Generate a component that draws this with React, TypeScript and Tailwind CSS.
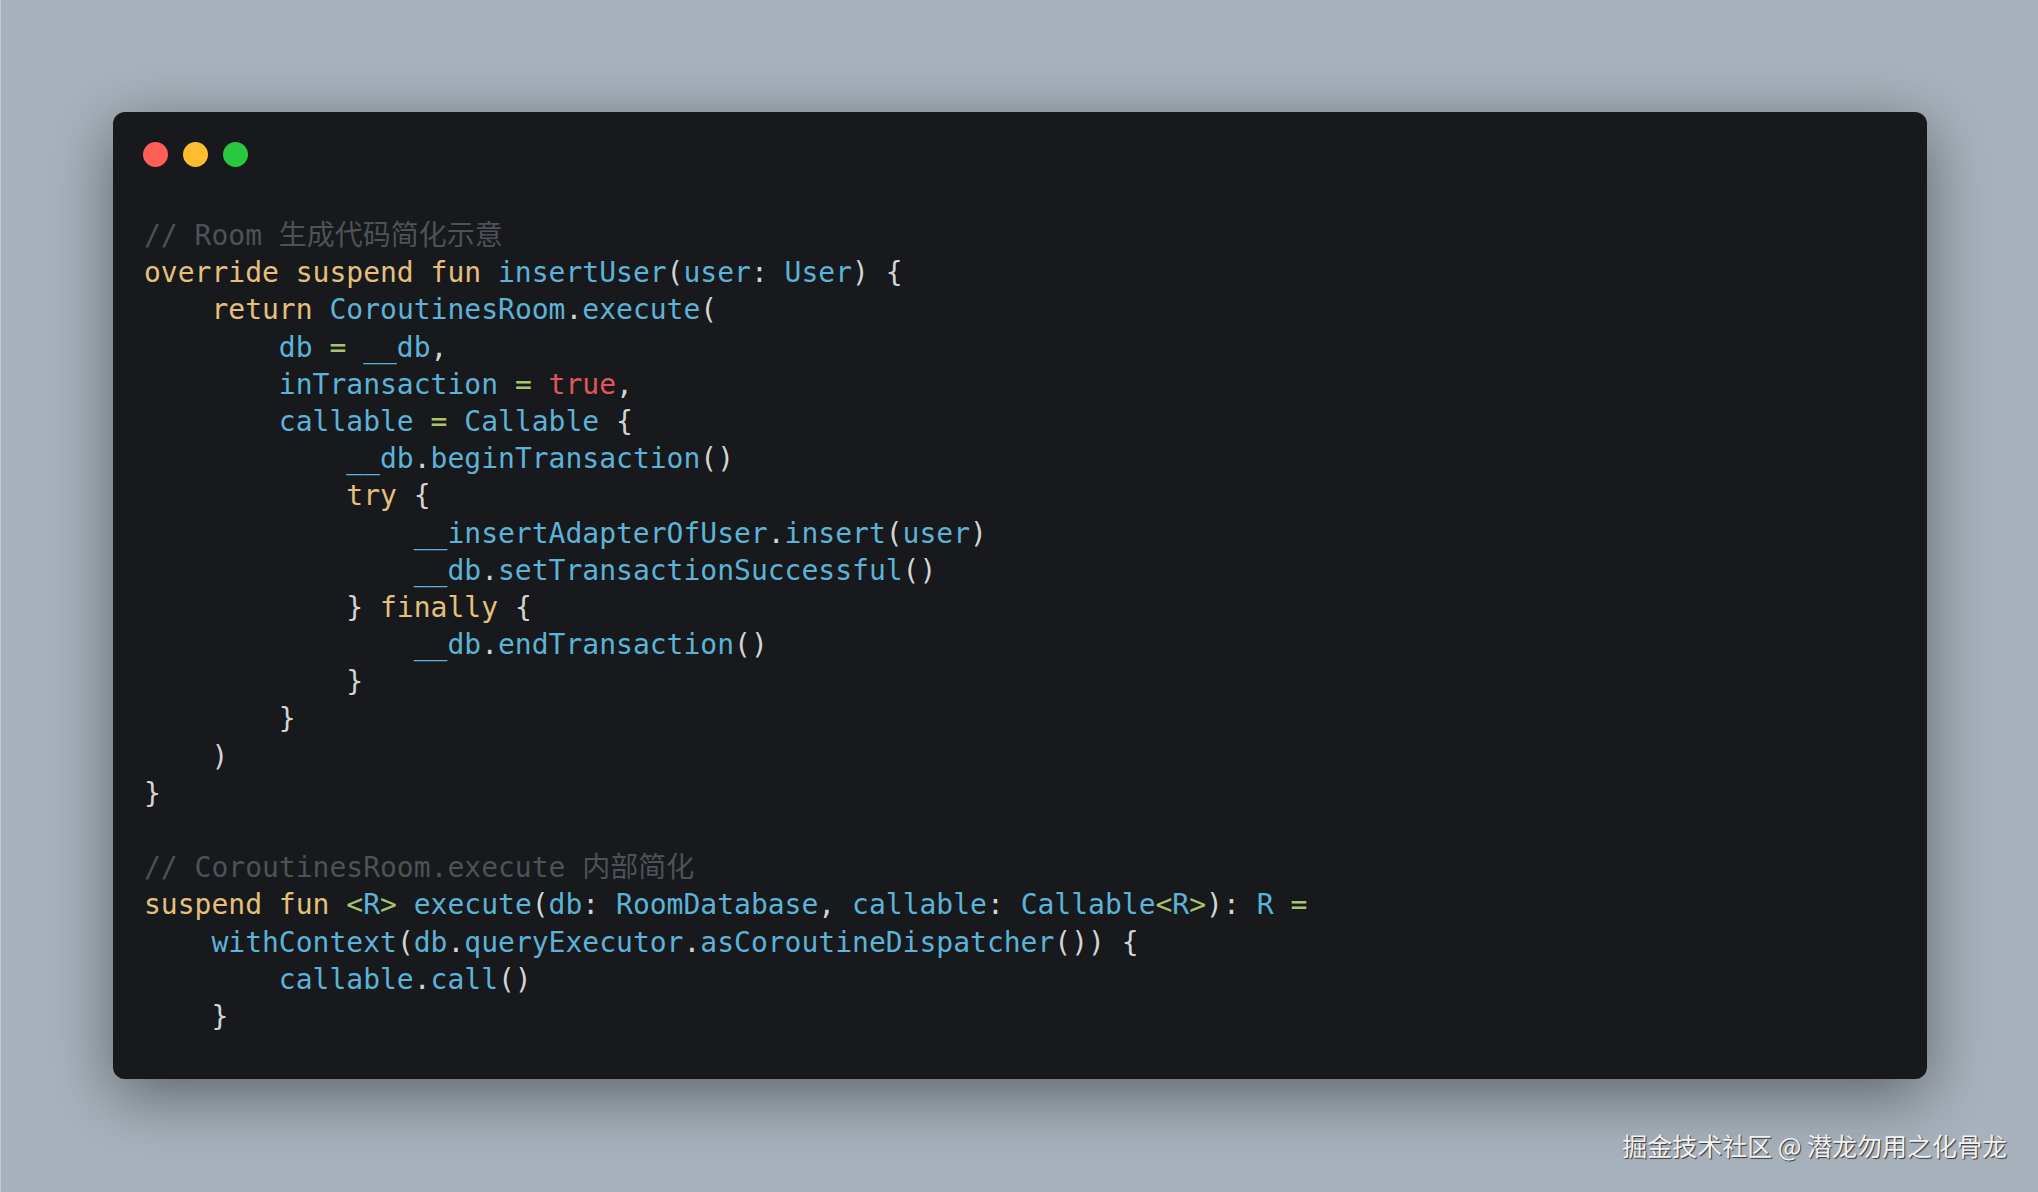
import React from 'react';

type Tok = [string, keyof typeof tone];

// token colours for the code block
const tone = {
  k: 'text-[#e5c07b]',
  f: 'text-[#5cb3d8]',
  p: 'text-[#d4d4d4]',
  o: 'text-[#a8c46c]',
  r: 'text-[#e0575b]',
  c: 'text-[#4c5258]',
};

const lines: Tok[][] = [
  [['// Room 生成代码简化示意', 'c']],
  [['override suspend fun ', 'k'], ['insertUser', 'f'], ['(', 'p'], ['user', 'f'], [': ', 'p'], ['User', 'f'], [') {', 'p']],
  [['    ', 'p'], ['return ', 'k'], ['CoroutinesRoom', 'f'], ['.', 'p'], ['execute', 'f'], ['(', 'p']],
  [['        ', 'p'], ['db ', 'f'], ['= ', 'o'], ['__db', 'f'], [',', 'p']],
  [['        ', 'p'], ['inTransaction ', 'f'], ['= ', 'o'], ['true', 'r'], [',', 'p']],
  [['        ', 'p'], ['callable ', 'f'], ['= ', 'o'], ['Callable ', 'f'], ['{', 'p']],
  [['            ', 'p'], ['__db', 'f'], ['.', 'p'], ['beginTransaction', 'f'], ['()', 'p']],
  [['            ', 'p'], ['try ', 'k'], ['{', 'p']],
  [['                ', 'p'], ['__insertAdapterOfUser', 'f'], ['.', 'p'], ['insert', 'f'], ['(', 'p'], ['user', 'f'], [')', 'p']],
  [['                ', 'p'], ['__db', 'f'], ['.', 'p'], ['setTransactionSuccessful', 'f'], ['()', 'p']],
  [['            } ', 'p'], ['finally ', 'k'], ['{', 'p']],
  [['                ', 'p'], ['__db', 'f'], ['.', 'p'], ['endTransaction', 'f'], ['()', 'p']],
  [['            }', 'p']],
  [['        }', 'p']],
  [['    )', 'p']],
  [['}', 'p']],
  [],
  [['// CoroutinesRoom.execute 内部简化', 'c']],
  [
    ['suspend fun ', 'k'], ['<', 'o'], ['R', 'f'], ['>', 'o'], [' ', 'p'], ['execute', 'f'], ['(', 'p'], ['db', 'f'], [': ', 'p'],
    ['RoomDatabase', 'f'], [', ', 'p'], ['callable', 'f'], [': ', 'p'], ['Callable', 'f'], ['<', 'o'], ['R', 'f'], ['>', 'o'],
    ['): ', 'p'], ['R ', 'f'], ['=', 'o'],
  ],
  [['    ', 'p'], ['withContext', 'f'], ['(', 'p'], ['db', 'f'], ['.', 'p'], ['queryExecutor', 'f'], ['.', 'p'], ['asCoroutineDispatcher', 'f'], ['()) {', 'p']],
  [['        ', 'p'], ['callable', 'f'], ['.', 'p'], ['call', 'f'], ['()', 'p']],
  [['    }', 'p']],
];

export default function App() {
  return (
    <div className="flex h-[1192px] w-full flex-col overflow-hidden border-l border-[#c3cad1] bg-[#a8b2bc]">
      {/* Window */}
      <div className="ml-[112px] mt-[112px] flex h-[967px] w-[1814px] flex-col rounded-[12px] bg-[#17191c] pl-[30px] pt-[30px] shadow-[0_16px_64px_rgba(0,0,0,0.45)]">
        <div className="flex gap-[15px]">
          <span className="h-[25px] w-[25px] rounded-full bg-[#fe5f57]" />
          <span className="h-[25px] w-[25px] rounded-full bg-[#febc2e]" />
          <span className="h-[25px] w-[25px] rounded-full bg-[#28c840]" />
        </div>

        <pre className="mt-[50px] pl-[1px] font-['DejaVu_Sans_Mono','Noto_Sans_CJK_SC',monospace] text-[28px] leading-[37.2px]">
          {lines.map((line, i) => (
            <div key={i} className="h-[37.2px] whitespace-pre">
              {line.map(([text, t], j) => (
                <span key={j} className={tone[t]}>
                  {text}
                </span>
              ))}
            </div>
          ))}
        </pre>
      </div>

      {/* Watermark */}
      <div className="mt-[51px] flex justify-end pr-[31px]">
        <p className="font-['Noto_Sans_CJK_SC',sans-serif] text-[25px] leading-[30px] text-[#f2f2f2] [text-shadow:1px_1px_1px_rgba(0,0,0,0.7)]">
          掘金技术社区 @ 潜龙勿用之化骨龙
        </p>
      </div>
    </div>
  );
}
